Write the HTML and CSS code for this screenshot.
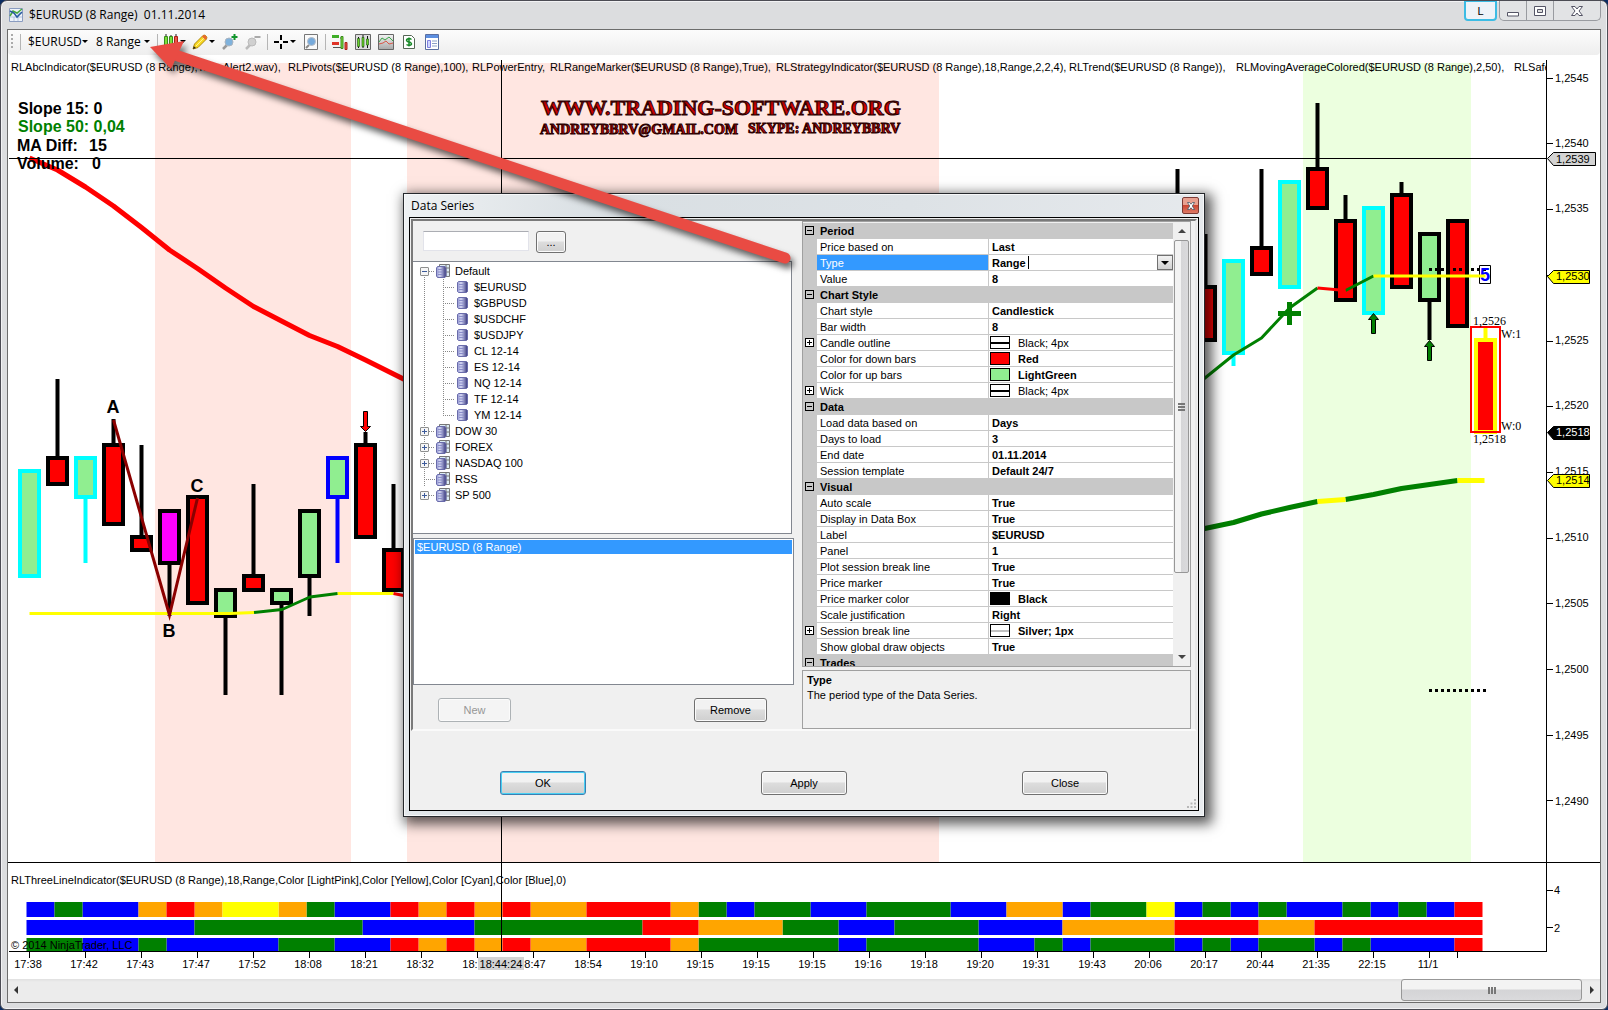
FILE: index.html
```html
<!DOCTYPE html>
<html lang="en">
<head>
<meta charset="utf-8">
<title>$EURUSD (8 Range) 01.11.2014</title>
<link rel="stylesheet" href="styles.css">
</head>
<body>
<svg width="0" height="0" class="defs" aria-hidden="true">
  <defs>
    <linearGradient id="gBlue" x1="0" x2="1" y1="0" y2="0"><stop offset="0" stop-color="#8f93cf"/><stop offset=".35" stop-color="#d5d8f5"/><stop offset="1" stop-color="#35357c"/></linearGradient>
    <linearGradient id="gGrey" x1="0" x2="0" y1="0" y2="1"><stop offset="0" stop-color="#f4f4f4"/><stop offset="1" stop-color="#a8a8a8"/></linearGradient>
    <linearGradient id="gLogo" x1="0" x2="0" y1="0" y2="1"><stop offset="0" stop-color="#4a0000"/><stop offset=".5" stop-color="#e00000"/><stop offset="1" stop-color="#900000"/></linearGradient>
    <symbol id="item" viewBox="0 0 12 12"><path d="M1.500 1.500l1-1h8l1 1v9l-1 1h-8l-1-1z" fill="url(#gBlue)" stroke="#6a6cab"/><path d="M3 3.500h5M3 6h5M3 8.500h5" stroke="#8a8dc8"/></symbol>
    <symbol id="group" viewBox="0 0 14 14"><path d="M3.500.5h10v12h-10z" fill="#dcecf5" stroke="#777"/><path d="M10 0v13M4 4h9M4 8h9" stroke="#777"/><path d="M.5 4l1-1.500h7.500l1 1.500v8l-1 1.500H1.500l-1-1.500z" fill="url(#gBlue)" stroke="#6a6cab"/><path d="M2 5.500h5M2 8h5M2 10.500h5" stroke="#8a8dc8"/></symbol>
  </defs>
</svg>

<main class="window">
  <header class="titlebar">
    <svg class="app-icon" viewBox="0 0 14 14"><path d="M.5.5h13v13H.5z" fill="#eef3fa" stroke="#8a9cc0"/><path d="M1 5h12M1 9h12M5 9v4M9 6v7" stroke="#9fb2d6" stroke-width=".7"/><path d="M1 8l3-5 4 2 5-4" fill="none" stroke="#46a83c" stroke-width="1.500"/><path d="M1 3l4 2 3 4 5-5" fill="none" stroke="#285ca0" stroke-width="1.500"/></svg>
    <h1 class="title">$EURUSD (8 Range)&nbsp; 01.11.2014</h1>
    <button class="link-btn">L</button>
    <div class="sys">
      <button class="sys-btn" aria-label="Minimize"><svg viewBox="0 0 14 14"><path d="M1.500 8.500h11v3.500h-11z" fill="#fff" stroke="#556"/></svg></button>
      <button class="sys-btn" aria-label="Restore"><svg viewBox="0 0 14 14"><path d="M1.500 2.500h11v9h-11z" fill="#fff" stroke="#556"/><path d="M4.500 5.500h5v3h-5z" fill="#ddd" stroke="#556"/></svg></button>
      <button class="sys-btn sys-close" aria-label="Close window"><svg viewBox="0 0 14 14"><path d="M1.500 2.500h3.500l2 2.500 2-2.500h3.500l-3.500 4.500 3.500 4.500H9L7 9l-2 2.500H1.500L5 7z" fill="#fff" stroke="#556"/></svg></button>
    </div>
  </header>

  <section class="client">
    <nav class="toolbar" aria-label="Chart tools">
      <span class="grip"></span><span class="sep"></span>
      <button class="tb tb-symbol">$EURUSD<i class="caret"></i></button>
      <button class="tb tb-period">8 Range<i class="caret"></i></button>
      <span class="sep"></span>
      <button class="tb tb-drop" aria-label="Chart style"><svg viewBox="0 0 16 16"><path d="M3 0v16M8 1v14M13 0v15" stroke="#222"/><path d="M1.500 2.500h3v11h-3zM6.500 2.500h3v10h-3z" fill="#7be03a" stroke="#3a8a1c"/><path d="M11.500 2.500h3v10h-3z" fill="#f05848" stroke="#a82018"/></svg><i class="caret"></i></button>
      <button class="tb tb-drop" aria-label="Draw"><svg viewBox="0 0 16 16"><path d="M1 15l1.500-5L11 1.500q1.500-1 3 .500t.500 3L6 13.500z" fill="#f8d820" stroke="#b08a10"/><path d="M4 12l8-8" stroke="#fff39a"/><path d="M11 1.500q1.500-1 3 .500t.500 3l-1 1-3.500-3.500z" fill="#e86a30"/><path d="M1 15l.8-2.700L4 14z" fill="#222"/></svg><i class="caret"></i></button>
      <button class="tb tb-icon" aria-label="Zoom in"><svg viewBox="0 0 16 16"><path d="M1 15l4-4" stroke="#999" stroke-width="2.500"/><circle cx="7" cy="8" r="4" fill="#7fb2dc" stroke="#a9b4c0"/><path d="M12.500 0v6M9.500 3h6" stroke="#12952c" stroke-width="2"/></svg></button>
      <button class="tb tb-icon" aria-label="Zoom out"><svg viewBox="0 0 16 16"><path d="M1 15l4-4" stroke="#bbb" stroke-width="2.500"/><circle cx="7" cy="8" r="4" fill="#d0d0d0" stroke="#bbb"/><path d="M9.500 3h6" stroke="#aaa" stroke-width="2"/></svg></button>
      <span class="sep"></span>
      <button class="tb tb-drop" aria-label="Crosshair"><svg viewBox="0 0 16 16"><path d="M8 1v5M8 10v5M1 8h5M10 8h5" stroke="#000" stroke-width="2"/></svg><i class="caret"></i></button>
      <button class="tb tb-icon" aria-label="Zoom frame"><svg viewBox="0 0 16 16"><path d="M1.500.5h13v15h-13z" fill="#fafafa" stroke="#777"/><path d="M3 14l3-3" stroke="#888" stroke-width="2"/><circle cx="8.500" cy="7.500" r="4" fill="#76aadb" stroke="#b5bcc6"/></svg></button>
      <span class="sep"></span>
      <button class="tb tb-icon" aria-label="Chart trader"><svg viewBox="0 0 16 16"><path d="M0 2.500h7" stroke="#3fae28" stroke-width="3"/><path d="M8 4h2v5M1 13.500h9" stroke="#555" fill="none"/><path d="M0 9.500h7" stroke="#e03428" stroke-width="3"/><path d="M9 2.500h2v12H9z" fill="#7be03a" stroke="#3a8a1c"/><path d="M13 8.500h2v7h-2z" fill="#f05848" stroke="#a82018"/></svg></button>
      <button class="tb tb-icon" aria-label="Data series"><svg viewBox="0 0 16 16"><path d="M.5.5h15v15H.5z" fill="#ddd" stroke="#666"/><path d="M3.500 3v11M8 1v13M12.500 2v12" stroke="#111"/><path d="M2.500 4.500h2v8h-2zM11.500 5h2v6h-2z" fill="#6bd22a" stroke="#185808" stroke-width=".6"/><path d="M7 3.500h2v9H7z" fill="#6bd22a" stroke="#185808" stroke-width=".6"/></svg></button>
      <button class="tb tb-icon" aria-label="Indicators"><svg viewBox="0 0 16 16"><path d="M.5.5h15v15H.5z" fill="url(#gGrey)" stroke="#666"/><path d="M1 8l3-4 3 2 4-3 4 4" fill="none" stroke="#3aa848"/><path d="M1 10l4-1 3-2 3 3 4-1" fill="none" stroke="#d85848"/></svg></button>
      <button class="tb tb-icon" aria-label="Strategies"><svg viewBox="0 0 16 16"><path d="M2.500 1.500h8l3 3v10h-11z" fill="#fff" stroke="#556655"/><path d="M10.500 5.500q-2-1.500-4-.500t0 2.500l3 1q2 1.500 0 2.500t-4-.500M8 3.500v9" fill="none" stroke="#188a28" stroke-width="1.500"/></svg></button>
      <button class="tb tb-icon" aria-label="Properties"><svg viewBox="0 0 16 16"><path d="M1.500.5h13v15h-13z" fill="#fff" stroke="#5a6ea0"/><path d="M2 1h12v3H2z" fill="#5b8ee0"/><path d="M3.500 6.500h3v7h-3z" fill="#cfd6ff" stroke="#8080e0"/><path d="M8 7h5M8 9.500h5M8 12h5" stroke="#8ba0c8"/></svg></button>
    </nav>

    <svg class="chart" viewBox="8 55 1592 924" role="img" aria-label="Candlestick chart">
      <path d="M155 63h196v799H155zM407 63h532v799H407z" fill="#ffe6e1"/>
      <path d="M1303 63h168v799h-168z" fill="#ecffdf"/>

      <g class="logo">
        <text x="541" y="115" font-size="22">WWW.TRADING-SOFTWARE.ORG</text>
        <text x="540" y="134" font-size="14">ANDREYBBRV@GMAIL.COM</text>
        <text x="748" y="133" font-size="14">SKYPE: ANDREYBBRV</text>
      </g>

      <g class="wicks">
        <path d="M57.500 379v78M113.500 419v25M141.500 445v91M169.500 564v52M225.500 617v78M253.500 484v91M281.500 604v91M309.500 577v39M365.500 432v12M393.500 484v65M1177.500 169v60M1205.500 234v60M1261.500 169v78M1317.500 103v65M1345.500 195v25M1401.500 182v12M1429.500 301v39"/>
        <path d="M85.500 498v65M1233.500 354v12" stroke="#0ff"/>
        <path d="M337.500 498v65" stroke="#00f"/>
        <path d="M1485.500 327v12" stroke="#ff0"/>
      </g>
      <g class="candles">
        <g fill="#f00" stroke="#000">
          <path d="M48 458h19v26H48zM104 445h19v79h-19zM132 537h19v13h-19zM188 497h19v106h-19zM244 576h19v14h-19zM356 445h19v92h-19zM384 550h19v40h-19z"/>
          <path d="M1196 287h19v53h-19zM1252 248h19v26h-19zM1308 169h19v39h-19zM1336 221h19v79h-19zM1392 195h19v92h-19zM1448 221h19v105h-19z"/>
        </g>
        <g fill="#90ee90">
          <path d="M20 471h19v105H20zM76 458h19v39H76zM1224 261h19v92h-19zM1280 182h19v105h-19zM1364 208h19v105h-19z" stroke="#0ff"/>
          <path d="M216 590h19v26h-19zM272 590h19v13h-19zM300 511h19v65h-19zM1420 234h19v66h-19z" stroke="#000"/>
          <path d="M328 458h19v39h-19z" stroke="#00f"/>
        </g>
        <path d="M160 511h19v52h-19z" fill="#f0f" stroke="#000"/>
        <path d="M1476 340h19v92h-19z" fill="#f00" stroke="#ff0"/>
      </g>
      <path d="M1471 327h29v105h-29z" fill="none" stroke="#f00" stroke-width="2"/>

      <g class="ma">
        <path d="M29.500 613.500H230l24-1M337.500 593.500h56" stroke="#ff0"/>
        <path d="M254 612.500l28-3 28-12.500 27.500-3.500" stroke="#008000"/>
        <path d="M393.500 593.500l15 3" stroke="#f00"/>
        <path d="M1200 382l33.500-27 28-17 28-30 28-20M1345.500 290.500l28-14.500" stroke="#008000"/>
        <path d="M1317.500 288l28 2.500" stroke="#f00"/>
      </g>
      <g class="trend">
        <path d="M29.500 158l28 12 28 17 28 19 28 21.500 28 22.500 28 18.500 28 19.500 28 18.500 28 14.500 28 14.500 28 11 28 13.500 28 14 28 14" stroke="#f00"/>
        <path d="M1200 529.500l33.500-7 28-8.500 28-6.500 28-6M1345.500 499.500l28-5 28-6 56-8" stroke="#008000"/>
        <path d="M1317.500 501.500l28-2M1457.500 480.500h27" stroke="#ff0"/>
      </g>
      <path d="M113.500 420l56 195 28-117" fill="none" stroke="#8b0000" stroke-width="3"/>
      <g class="abc"><text x="113" y="413">A</text><text x="169" y="637">B</text><text x="197" y="492">C</text></g>

      <path d="M1278 311h9v-9h5v9h9v5h-9v9h-5v-9h-9z" fill="#008000"/>
      <g stroke="#000" stroke-width="1">
        <path d="M363.500 411.500h4v15h3l-5 5-5-5h3z" fill="#f00"/>
        <path d="M1371.500 333.500h4v-14h3l-5-6-5 6h3zM1427.500 360.500h4v-14h3l-5-6-5 6h3z" fill="#008000"/>
      </g>
      <path d="M1479.500 265.500h11v18h-11z" fill="#fff" stroke="#000"/>
      <path d="M1429 269.500h34M1471 269.500h16M1429 690.500h57" stroke="#000" stroke-width="3" stroke-dasharray="3 3"/>
      <text x="1480" y="281" class="five">5</text>
      <path d="M1373.500 276h112" stroke="#ff0" stroke-width="3"/>
      <g class="serif"><text x="1473" y="325">1,2526</text><text x="1473" y="443">1,2518</text><text x="1501" y="338">W:1</text><text x="1501" y="430">W:0</text></g>

      <g class="stats">
        <text x="18" y="114">Slope 15: 0</text>
        <text x="18" y="132" fill="#008000">Slope 50: 0,04</text>
        <text x="17" y="151">MA Diff:<tspan x="89">15</tspan></text>
        <text x="17" y="169">Volume:<tspan x="92">0</tspan></text>
      </g>

      <svg x="8" y="55" width="1538" height="30" viewBox="8 55 1538 30"><text class="label" x="11" y="71">RLAbcIndicator($EURUSD (8 Range),True,Alert2.wav), <tspan x="288">RLPivots($EURUSD (8 Range),100),</tspan> <tspan x="472">RLPowerEntry,</tspan> <tspan x="550">RLRangeMarker($EURUSD (8 Range),True),</tspan> <tspan x="776">RLStrategyIndicator($EURUSD (8 Range),18,Range,2,2,4),</tspan> <tspan x="1069">RLTrend($EURUSD (8 Range)),</tspan> <tspan x="1236">RLMovingAverageColored($EURUSD (8 Range),2,50),</tspan> <tspan x="1514">RLSafe</tspan></text></svg>

      <g transform="translate(26.500 909.500) scale(28 1)" fill="none" stroke-width="15">
        <path d="M0 0h1M2 0h2M11 0h2M25 0h1M28 0h2M33 0h2M37 0h1M41 0h1M43 0h1M45 0h2M48 0h1M50 0h1" stroke="#00f"/>
        <path d="M1 0h1M10 0h1M24 0h1M26 0h2M30 0h3M38 0h2M42 0h1M44 0h1M47 0h1M49 0h1" stroke="#008000"/>
        <path d="M4 0h1M6 0h1M9 0h1M14 0h1M16 0h1M18 0h2M23 0h1M35 0h2" stroke="#ffa500"/>
        <path d="M5 0h1M13 0h1M15 0h1M17 0h1M20 0h3M51 0h1" stroke="#f00"/>
        <path d="M7 0h2M40 0h1" stroke="#ff0"/>
      </g>
      <g transform="translate(26.500 927.500) scale(28 1)" fill="none" stroke-width="15">
        <path d="M0 0h6M12 0h4M29 0h2M34 0h3" stroke="#00f"/>
        <path d="M6 0h6M16 0h6M27 0h2M31 0h3" stroke="#008000"/>
        <path d="M24 0h3M37 0h4M44 0h2" stroke="#ffa500"/>
        <path d="M22 0h2M41 0h3M46 0h6" stroke="#f00"/>
      </g>
      <g transform="translate(26.500 944.500) scale(28 1)" fill="none" stroke-width="13">
        <path d="M2 0h2M5 0h4M11 0h2M29 0h1M34 0h2M37 0h1M41 0h1M43 0h1M46 0h1M48 0h3" stroke="#00f"/>
        <path d="M0 0h2M4 0h1M9 0h2M24 0h5M30 0h4M36 0h1M38 0h3M42 0h1M44 0h2M47 0h1" stroke="#008000"/>
        <path d="M14 0h1M16 0h1M18 0h2M23 0h1" stroke="#ffa500"/>
        <path d="M13 0h1M15 0h1M17 0h1M20 0h3M51 0h1" stroke="#f00"/>
      </g>
      <text class="label" x="11" y="884">RLThreeLineIndicator($EURUSD (8 Range),18,Range,Color [LightPink],Color [Yellow],Color [Cyan],Color [Blue],0)</text>
      <text class="label" x="11" y="949">© 2014 NinjaTrader, LLC</text>

      <path d="M8 862.500h1592M9 951.500h1538M1546.500 60v892M9 158.500h1538M501.500 60v892" stroke="#000"/>
      <path d="M1547 78.500h6M1547 143.500h6M1547 209.500h6M1547 275.500h6M1547 341.500h6M1547 406.500h6M1547 472.500h6M1547 538.500h6M1547 603.500h6M1547 669.500h6M1547 735.500h6M1547 800.500h6M1547 890.500h6M1547 927.500h6" stroke="#000"/>
      <path d="M29.500 952v6M85.500 952v6M141.500 952v6M197.500 952v6M253.500 952v6M309.500 952v6M365.500 952v6M421.500 952v6M477.500 952v6M533.500 952v6M589.500 952v6M645.500 952v6M701.500 952v6M757.500 952v6M813.500 952v6M869.500 952v6M925.500 952v6M981.500 952v6M1037.500 952v6M1093.500 952v6M1149.500 952v6M1205.500 952v6M1261.500 952v6M1317.500 952v6M1373.500 952v6M1429.500 952v6M1457.500 952v6" stroke="#000"/>
      <g class="axis">
        <text x="1555" y="82">1,2545</text><text x="1555" y="147">1,2540</text><text x="1555" y="212">1,2535</text><text x="1555" y="344">1,2525</text><text x="1555" y="409">1,2520</text><text x="1555" y="475">1,2515</text><text x="1555" y="541">1,2510</text><text x="1555" y="607">1,2505</text><text x="1555" y="673">1,2500</text><text x="1555" y="739">1,2495</text><text x="1555" y="805">1,2490</text>
        <text x="1554" y="894">4</text><text x="1554" y="932">2</text>
      </g>
      <g stroke="#000">
        <path d="M1547.500 158.500l6-6h42v13h-42z" fill="#d3d3d3"/>
        <path d="M1547.500 276.500l6-6h36v13h-36zM1547.500 480.500l6-6h36v13h-36z" fill="#ff0"/>
        <path d="M1547.500 432.500l6-6h36v13h-36z" fill="#000"/>
      </g>
      <g class="axis"><text x="1556" y="163">1,2539</text><text x="1556" y="280">1,2530</text><text x="1556" y="436" fill="#fff">1,2518</text><text x="1556" y="484">1,2514</text></g>
      <g class="axis times">
        <text x="28" y="968">17:38</text><text x="84" y="968">17:42</text><text x="140" y="968">17:43</text><text x="196" y="968">17:47</text><text x="252" y="968">17:52</text><text x="308" y="968">18:08</text><text x="364" y="968">18:21</text><text x="420" y="968">18:32</text><text x="470" y="968">18:</text><text x="535" y="968">8:47</text><text x="588" y="968">18:54</text><text x="644" y="968">19:10</text><text x="700" y="968">19:15</text><text x="756" y="968">19:15</text><text x="812" y="968">19:15</text><text x="868" y="968">19:16</text><text x="924" y="968">19:18</text><text x="980" y="968">19:20</text><text x="1036" y="968">19:31</text><text x="1092" y="968">19:43</text><text x="1148" y="968">20:06</text><text x="1204" y="968">20:17</text><text x="1260" y="968">20:44</text><text x="1316" y="968">21:35</text><text x="1372" y="968">22:15</text><text x="1428" y="968">11/1</text>
        <path d="M478 957h46v13h-46z" fill="#d3d3d3"/><text x="501" y="968">18:44:24</text>
      </g>
    </svg>

    <div class="hscroll">
      <i class="arrow-left"></i><span class="hthumb"><i></i><i></i><i></i></span><i class="arrow-right"></i>
    </div>
  </section>
</main>

<section class="dialog" role="dialog" aria-labelledby="dlg-title">
  <header class="dlg-title"><h2 id="dlg-title">Data Series</h2>
    <button class="dlg-x" aria-label="Close dialog"><svg viewBox="0 0 10 10"><path d="M1.500 1.500h2L5 3.200l1.500-1.700h2L6.300 5l2.200 3.500h-2L5 6.800 3.500 8.500h-2L3.700 5z" fill="#fff" stroke="#456" stroke-width=".8"/></svg></button></header>
  <div class="dlg-body">
    <div class="panel">
      <div class="left">
        <div class="search"><input type="text" aria-label="Instrument"><button class="btn btn-dots">...</button></div>
        <ul class="tree">
          <li><div class="node"><button class="exp" aria-label="Collapse Default"></button><i class="dots"></i><svg class="gi"><use href="#group"/></svg>Default</div>
            <ul class="kids">
              <li><i class="dots"></i><svg class="ii"><use href="#item"/></svg>$EURUSD</li>
              <li><i class="dots"></i><svg class="ii"><use href="#item"/></svg>$GBPUSD</li>
              <li><i class="dots"></i><svg class="ii"><use href="#item"/></svg>$USDCHF</li>
              <li><i class="dots"></i><svg class="ii"><use href="#item"/></svg>$USDJPY</li>
              <li><i class="dots"></i><svg class="ii"><use href="#item"/></svg>CL 12-14</li>
              <li><i class="dots"></i><svg class="ii"><use href="#item"/></svg>ES 12-14</li>
              <li><i class="dots"></i><svg class="ii"><use href="#item"/></svg>NQ 12-14</li>
              <li><i class="dots"></i><svg class="ii"><use href="#item"/></svg>TF 12-14</li>
              <li><i class="dots"></i><svg class="ii"><use href="#item"/></svg>YM 12-14</li>
            </ul></li>
          <li><div class="node"><button class="exp plus" aria-label="Expand DOW 30"></button><i class="dots"></i><svg class="gi"><use href="#group"/></svg>DOW 30</div></li>
          <li><div class="node"><button class="exp plus" aria-label="Expand FOREX"></button><i class="dots"></i><svg class="gi"><use href="#group"/></svg>FOREX</div></li>
          <li><div class="node"><button class="exp plus" aria-label="Expand NASDAQ 100"></button><i class="dots"></i><svg class="gi"><use href="#group"/></svg>NASDAQ 100</div></li>
          <li><div class="node"><i class="dots dots-long"></i><svg class="gi"><use href="#group"/></svg>RSS</div></li>
          <li><div class="node"><button class="exp plus" aria-label="Expand SP 500"></button><i class="dots"></i><svg class="gi"><use href="#group"/></svg>SP 500</div></li>
        </ul>
        <ul class="list"><li>$EURUSD (8 Range)</li></ul>
        <div class="pair"><button class="btn btn-mid" disabled>New</button><button class="btn btn-mid">Remove</button></div>
      </div>
      <div class="right">
        <div class="grid">
          <table>
            <colgroup><col class="c1"><col class="c2"><col></colgroup>
            <tbody>
            <tr class="cat"><td><i class="box"></i></td><th colspan="2">Period</th></tr>
            <tr><td></td><td>Price based on</td><td>Last</td></tr>
            <tr class="sel"><td></td><td><label for="type">Type</label></td><td><div class="combo"><input id="type" type="text" value="Range"><i class="cursor"></i><button aria-label="Open list"><i></i></button></div></td></tr>
            <tr><td></td><td>Value</td><td>8</td></tr>
            <tr class="cat"><td><i class="box"></i></td><th colspan="2">Chart Style</th></tr>
            <tr><td></td><td>Chart style</td><td>Candlestick</td></tr>
            <tr><td></td><td>Bar width</td><td>8</td></tr>
            <tr><td><i class="box box-plus"></i></td><td>Candle outline</td><td class="plain"><i class="sw line"></i>Black; 4px</td></tr>
            <tr><td></td><td>Color for down bars</td><td><i class="sw red"></i>Red</td></tr>
            <tr><td></td><td>Color for up bars</td><td><i class="sw green"></i>LightGreen</td></tr>
            <tr><td><i class="box box-plus"></i></td><td>Wick</td><td class="plain"><i class="sw line"></i>Black; 4px</td></tr>
            <tr class="cat"><td><i class="box"></i></td><th colspan="2">Data</th></tr>
            <tr><td></td><td>Load data based on</td><td>Days</td></tr>
            <tr><td></td><td>Days to load</td><td>3</td></tr>
            <tr><td></td><td>End date</td><td>01.11.2014</td></tr>
            <tr><td></td><td>Session template</td><td>Default 24/7</td></tr>
            <tr class="cat"><td><i class="box"></i></td><th colspan="2">Visual</th></tr>
            <tr><td></td><td>Auto scale</td><td>True</td></tr>
            <tr><td></td><td>Display in Data Box</td><td>True</td></tr>
            <tr><td></td><td>Label</td><td>$EURUSD</td></tr>
            <tr><td></td><td>Panel</td><td>1</td></tr>
            <tr><td></td><td>Plot session break line</td><td>True</td></tr>
            <tr><td></td><td>Price marker</td><td>True</td></tr>
            <tr><td></td><td>Price marker color</td><td><i class="sw black"></i>Black</td></tr>
            <tr><td></td><td>Scale justification</td><td>Right</td></tr>
            <tr><td><i class="box box-plus"></i></td><td>Session break line</td><td><i class="sw thin"></i>Silver; 1px</td></tr>
            <tr><td></td><td>Show global draw objects</td><td>True</td></tr>
            <tr class="cat"><td><i class="box"></i></td><th colspan="2">Trades</th></tr>
            </tbody>
          </table>
          <div class="vscroll"><i class="arrow-up"></i><span class="vthumb"><i></i><i></i><i></i></span><i class="arrow-down"></i></div>
        </div>
        <div class="desc"><b>Type</b><p>The period type of the Data Series.</p></div>
      </div>
    </div>
    <footer class="actions"><button class="btn btn-big primary">OK</button><button class="btn btn-big">Apply</button><button class="btn btn-big">Close</button></footer>
    <svg class="size-grip" viewBox="0 0 9 9"><path d="M7 0h2v2H7zM7 3.500h2v2H7zM3.500 3.500h2v2h-2zM7 7h2v2H7zM3.500 7h2v2h-2zM0 7h2v2H0z" fill="#b8b8b8"/></svg>
  </div>
</section>

<svg class="callout" viewBox="0 0 820 290" aria-hidden="true">
  <path d="M178 56L785 258" stroke="#e94b43" stroke-width="11" stroke-linecap="round"/>
  <path d="M150 47l34-6-13 28z" fill="#e94b43"/>
</svg>
</body>
</html>
```
FILE: styles.css
```css
* { box-sizing: border-box; }
body { margin: 0; background: #0b2c62; font: 11px/16px "Liberation Sans", Arial, sans-serif; color: #000; }
h1, h2, p, ul { margin: 0; padding: 0; font-weight: normal; }
ul { list-style: none; }
button, input { font: inherit; color: inherit; margin: 0; padding: 0; }
i { font-style: normal; }
.defs { position: absolute; }

.window { border: 1px solid #4c4c54; border-radius: 7px 7px 6px 6px; background: #dcdddf; padding: 0 6px 6px; box-shadow: inset 0 0 0 1px #f2f2f4; }
.titlebar { display: flex; height: 28px; align-items: center; }
.app-icon { width: 14px; height: 14px; margin: 0 6px 0 2px; }
.title { flex: 1; font: 12px/16px "Open Sans", sans-serif; }
.link-btn { align-self: flex-start; width: 33px; height: 20px; border: 2px solid #3cbce4; border-top-width: 1px; border-radius: 0 0 4px 4px; background: #eef3f8; margin-right: 2px; }
.sys { align-self: flex-start; display: flex; height: 20px; border: 1px solid #999ba0; border-top: 0; border-radius: 0 0 5px 5px; }
.sys-btn { width: 27px; border: 0; border-right: 1px solid #999ba0; background: #e2e3e5; display: flex; align-items: center; justify-content: center; }
.sys-btn svg { width: 14px; height: 14px; }
.sys-close { width: 46px; border-right: 0; border-radius: 0 0 5px 0; }
.sys-btn:first-child { border-radius: 0 0 0 5px; }

.client { border: 1px solid #6c6c6c; background: #fff; }
.toolbar { display: flex; align-items: center; height: 25px; padding: 0 0 2px 3px; background: linear-gradient(#fcfcfc, #eeeeee); border-radius: 0 0 4px 4px; }
.grip { width: 2px; height: 16px; margin-right: 4px; background: repeating-linear-gradient(#aaa 0 2px, transparent 2px 4px); }
.sep { width: 6px; height: 16px; background: linear-gradient(90deg, transparent 3px, #b5b5b5 3px 4px, transparent 4px); }
.tb { display: flex; align-items: center; height: 22px; border: 0; background: none; font: 12px/16px "Open Sans", sans-serif; white-space: nowrap; }
.tb svg { width: 16px; height: 16px; }
.tb-symbol { width: 69px; padding: 0 5px; justify-content: space-between; }
.tb-period { width: 62px; padding: 0 4px; justify-content: space-between; }
.tb-drop { width: 29px; padding: 0 3px; justify-content: space-between; }
.tb-icon { width: 23px; justify-content: center; }
.caret { border: 3px solid transparent; border-top-color: #000; border-bottom: 0; }

.chart { display: block; width: 100%; height: auto; font-family: "Liberation Sans", Arial, sans-serif; }
.logo text { font-family: "Liberation Serif", serif; font-weight: bold; fill: url(#gLogo); stroke: #2a0000; stroke-width: 1px; }
.wicks { stroke: #000; stroke-width: 4px; }
.candles { stroke-width: 4px; }
.ma, .trend { fill: none; stroke-width: 3px; stroke-linejoin: round; }
.trend { stroke-width: 5px; }
.abc { font-size: 18px; font-weight: bold; text-anchor: middle; }
.five { font-size: 18px; font-weight: bold; fill: #00f; }
.serif { font: 12px "Liberation Serif", serif; }
.stats { font-size: 16px; font-weight: bold; }
.label, .axis { font-size: 11px; }
.times { text-anchor: middle; }

.hscroll { display: flex; align-items: center; height: 23px; padding: 0 6px 1px; background: linear-gradient(#e0e0e0, #ececec 3px); }
.hthumb { width: 181px; height: 22px; margin: 0 8px 0 auto; border: 1px solid #979797; border-radius: 3px; background: linear-gradient(#f3f3f3 45%, #d4d4d6 50%, #dadadc); display: flex; gap: 1px; align-items: center; justify-content: center; }
.hthumb i { width: 2px; height: 7px; background: #777; }
.arrow-left, .arrow-right { border: 4px solid transparent; }
.arrow-left { border-right-color: #333; border-left: 0; }
.arrow-right { border-left-color: #333; border-right: 0; }

.dialog { position: absolute; left: 403px; top: 193px; width: 802px; padding: 0 5px 5px; border: 1px solid #25282c; background: linear-gradient(100deg, #eef1f3, #d9dfe3 200px, #dde2e6 500px, #e9ecef); box-shadow: inset 0 0 0 1px #f7f8f9, 4px 4px 12px 3px rgba(0, 0, 0, .65); }
.dlg-title { display: flex; align-items: center; justify-content: space-between; height: 23px; padding: 0 0 0 2px; }
.dlg-title h2 { font: 12px/16px "Open Sans", sans-serif; }
.dlg-x { width: 17px; height: 17px; border: 1px solid #7c3a34; border-radius: 2px; background: linear-gradient(#e8a090 45%, #cc4632 50%, #dd7a66); display: flex; align-items: center; justify-content: center; }
.dlg-x svg { width: 10px; height: 10px; }
.dlg-body { position: relative; border: 1px solid #000; background: #f0f0f0; padding: 1px; }
.panel { display: flex; gap: 8px; padding-right: 4px; border: 2px solid; border-color: #7a7a7a #e8e8e8 #fafafa #7a7a7a; }
.left { flex: 0 0 381px; }
.right { flex: 1; min-width: 0; }
.search { display: flex; gap: 7px; height: 40px; padding: 10px; align-items: flex-start; }
.search input { width: 106px; height: 20px; border: 1px solid #e2e3ea; border-top-color: #abadb3; background: #fff; }
.btn { border: 1px solid #707070; border-radius: 3px; background: linear-gradient(#f2f2f2 45%, #dddddd 50%, #cfcfcf); box-shadow: inset 0 0 0 1px #fbfbfb; height: 24px; }
.btn:disabled { border-color: #adb2b5; background: #f4f4f4; color: #969696; }
.btn-dots { width: 30px; height: 22px; }
.btn-mid { width: 73px; }
.btn-big { width: 86px; }
.primary { border-color: #3c7fb1; box-shadow: inset 0 0 0 1px #48d0f4; }
.tree { width: 379px; height: 273px; margin-bottom: 4px; padding: 1px 0 0 7px; border: 1px solid #828790; border-left: 0; background: #fff; }
.tree > li:not(:last-child) { background: repeating-linear-gradient(#888 0 1px, transparent 1px 2px) 4px 0 / 1px 100% no-repeat; }
.tree > li:first-child { background-position: 4px 8px; }
.node, .kids li { display: flex; align-items: center; height: 16px; }
.exp { width: 9px; height: 9px; border: 1px solid #8e8f8f; border-radius: 1px; background: linear-gradient(#3c5a9a, #3c5a9a) center / 5px 1px no-repeat, #f6f6f6; }
.plus { background: linear-gradient(#3c5a9a, #3c5a9a) center / 5px 1px no-repeat, linear-gradient(#3c5a9a, #3c5a9a) center / 1px 5px no-repeat, #f6f6f6; }
.dots { width: 6px; height: 1px; margin-right: 1px; background: repeating-linear-gradient(90deg, #888 0 1px, transparent 1px 2px); }
.dots-long { width: 11px; margin-left: 4px; }
.gi { width: 14px; height: 14px; margin-right: 5px; }
.ii { width: 12px; height: 12px; margin-right: 6px; }
.kids { margin-left: 23px; background: repeating-linear-gradient(#888 0 1px, transparent 1px 2px) 0 0 / 1px 136px no-repeat; }
.kids .dots { width: 11px; margin-right: 2px; }
.list { height: 147px; border: 1px solid #828790; background: #fff; padding: 1px; }
.list li { height: 14px; padding-left: 2px; line-height: 14px; background: #39f; color: #fff; }
.pair { display: flex; justify-content: space-between; padding: 13px 27px 7px 25px; }

.grid { display: flex; height: 446px; overflow: hidden; border: 1px solid #a0a0a0; }
.grid table { flex: 1; table-layout: fixed; border-collapse: separate; border-spacing: 0; margin-top: 1px; background: #fff; height: 448px; }
.c1 { width: 14px; }
.c2 { width: 172px; }
.grid tr { height: 16px; }
.grid td, .grid th { height: 16px; padding: 1px 3px 0; border-bottom: 1px solid #c8c8c8; line-height: 14px; text-align: left; white-space: nowrap; }
.grid td:first-child { padding: 0 2px; background: #c8c8c8; }
.grid td:nth-child(2) { border-right: 1px solid #c8c8c8; }
.grid td:nth-child(3) { font-weight: bold; }
.grid td.plain { font-weight: normal; }
.grid .cat th { background: #c8c8c8; }
.grid .sel td:nth-child(2) { background: #39f; color: #fff; }
.grid .sel td:last-child { padding: 0 0 0 3px; }
.box { display: block; width: 9px; height: 9px; border: 1px solid #000; background: linear-gradient(#000, #000) center / 5px 1px no-repeat; }
.box-plus { background: linear-gradient(#000, #000) center / 5px 1px no-repeat, linear-gradient(#000, #000) center / 1px 5px no-repeat, #fff; }
.sw { display: inline-block; width: 20px; height: 13px; margin: 0 8px 0 -2px; border: 1px solid #000; vertical-align: top; }
.red { background: #f00; }
.green { background: #90ee90; }
.black { background: #000; }
.line { background: linear-gradient(#000, #000) center / 100% 2px no-repeat; }
.thin { background: linear-gradient(#c0c0c0, #c0c0c0) center / 100% 2px no-repeat; }
.combo { display: flex; height: 15px; }
.combo input { width: 36px; border: 0; background: none; font-weight: bold; outline: 0; }
.cursor { width: 1px; height: 13px; margin-top: 1px; background: #000; }
.combo button { width: 16px; height: 15px; margin-left: auto; border: 1px solid #707070; background: linear-gradient(#f2f2f2, #d0d0d0); display: flex; align-items: center; justify-content: center; }
.combo button i { border: 4px solid transparent; border-top-color: #000; border-bottom: 0; }
.vscroll { width: 17px; display: flex; flex-direction: column; align-items: center; background: #f0f0f0; padding: 7px 0; }
.arrow-up { border: 4px solid transparent; border-bottom-color: #444; border-top: 0; }
.arrow-down { border: 4px solid transparent; border-top-color: #444; border-bottom: 0; margin-top: auto; }
.vthumb { width: 15px; height: 333px; margin-top: 7px; border: 1px solid #979797; border-radius: 2px; background: linear-gradient(90deg, #f3f3f3 45%, #d6d6d8 50%, #dadadc); display: flex; flex-direction: column; gap: 1px; align-items: center; justify-content: center; }
.vthumb i { width: 7px; height: 2px; background: #777; }
.desc { height: 59px; margin-top: 3px; padding: 2px 4px; border: 1px solid #a0a0a0; line-height: 15px; }
.actions { display: flex; justify-content: space-between; padding: 40px 89px 14px; }
.size-grip { position: absolute; right: 2px; bottom: 2px; width: 9px; height: 9px; }
.callout { position: absolute; left: 0; top: 0; width: 820px; height: 290px; filter: drop-shadow(3px 5px 3px rgba(0, 0, 0, .6)); pointer-events: none; }
```
